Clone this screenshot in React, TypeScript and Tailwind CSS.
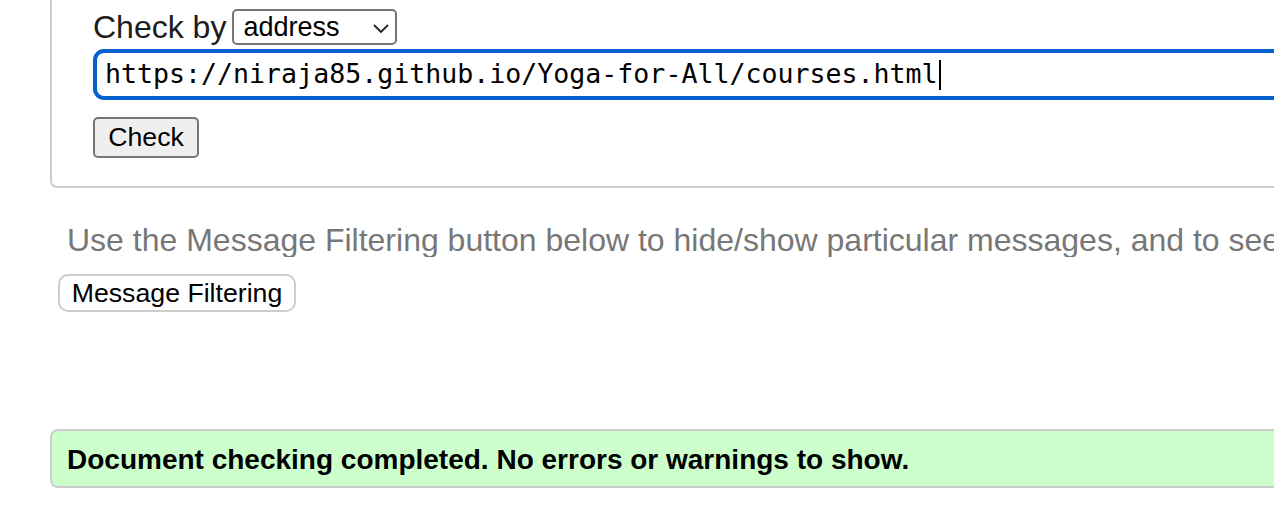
import React from "react";

const sans = { fontFamily: '"Liberation Sans", Arial, sans-serif' };

export default function App() {
  return (
    <div className="w-[1274px] h-[514px] overflow-hidden bg-white" style={sans}>
      <div className="w-[1500px] pl-[50px]">
        {/* fieldset box (top is above the viewport) */}
        <div className="border-2 border-t-0 border-[#cccccc] rounded-b-[7px] pl-[41px] pt-[9px] pb-[28px]">
          <div className="flex items-center h-[36px]">
            <span className="text-[32px] leading-none text-[#1c1c1c] mr-[6px] -mt-[1px]">Check by</span>
            <div className="relative w-[165px] h-[36px] border-2 border-[#767676] rounded-[5px] bg-white flex items-center pl-[9px]">
              <span className="text-[27px] leading-none text-black">address</span>
              <svg className="absolute left-[138px] top-[12px]" width="18" height="11" viewBox="0 0 18 11">
                <path d="M2 2 L9 9 L16 2" fill="none" stroke="#222" strokeWidth="1.8" />
              </svg>
            </div>
          </div>
          <div className="mt-[4px] h-[51px] border-[4px] border-[#0560cf] rounded-[11px] flex items-center pl-[8px]">
            <span
              className="text-[26.6px] leading-none text-black"
              style={{ fontFamily: '"DejaVu Sans Mono", monospace' }}
            >
              https://niraja85.github.io/Yoga-for-All/courses.html
            </span>
            <span className="inline-block w-[2px] h-[30px] bg-black ml-[1px]" />
          </div>
          <div className="mt-[17px] w-[106px] h-[41px] border-2 border-[#767676] rounded-[5px] bg-[#efefef] flex items-center justify-center">
            <span className="text-[26.7px] leading-none text-black">Check</span>
          </div>
        </div>

        <div className="pl-[17px] mt-[35px] text-[32px] leading-[34px] text-[#777777] whitespace-nowrap overflow-hidden w-[1224px]">
          Use the Message Filtering button below to hide/show particular messages, and to see
        </div>

        <div className="mt-[17px] ml-[8px] w-[238px] h-[38px] border-2 border-[#cccccc] rounded-[10px] bg-white flex items-center justify-center">
          <span className="text-[26.7px] leading-none text-black">Message Filtering</span>
        </div>

        <div className="mt-[117px] h-[59px] border-2 border-[#cccccc] rounded-[8px] bg-[#ccffcc] flex items-center pl-[15px] pt-[2px]">
          <span className="text-[28px] leading-none font-bold text-black">
            Document checking completed. No errors or warnings to show.
          </span>
        </div>
      </div>
    </div>
  );
}
